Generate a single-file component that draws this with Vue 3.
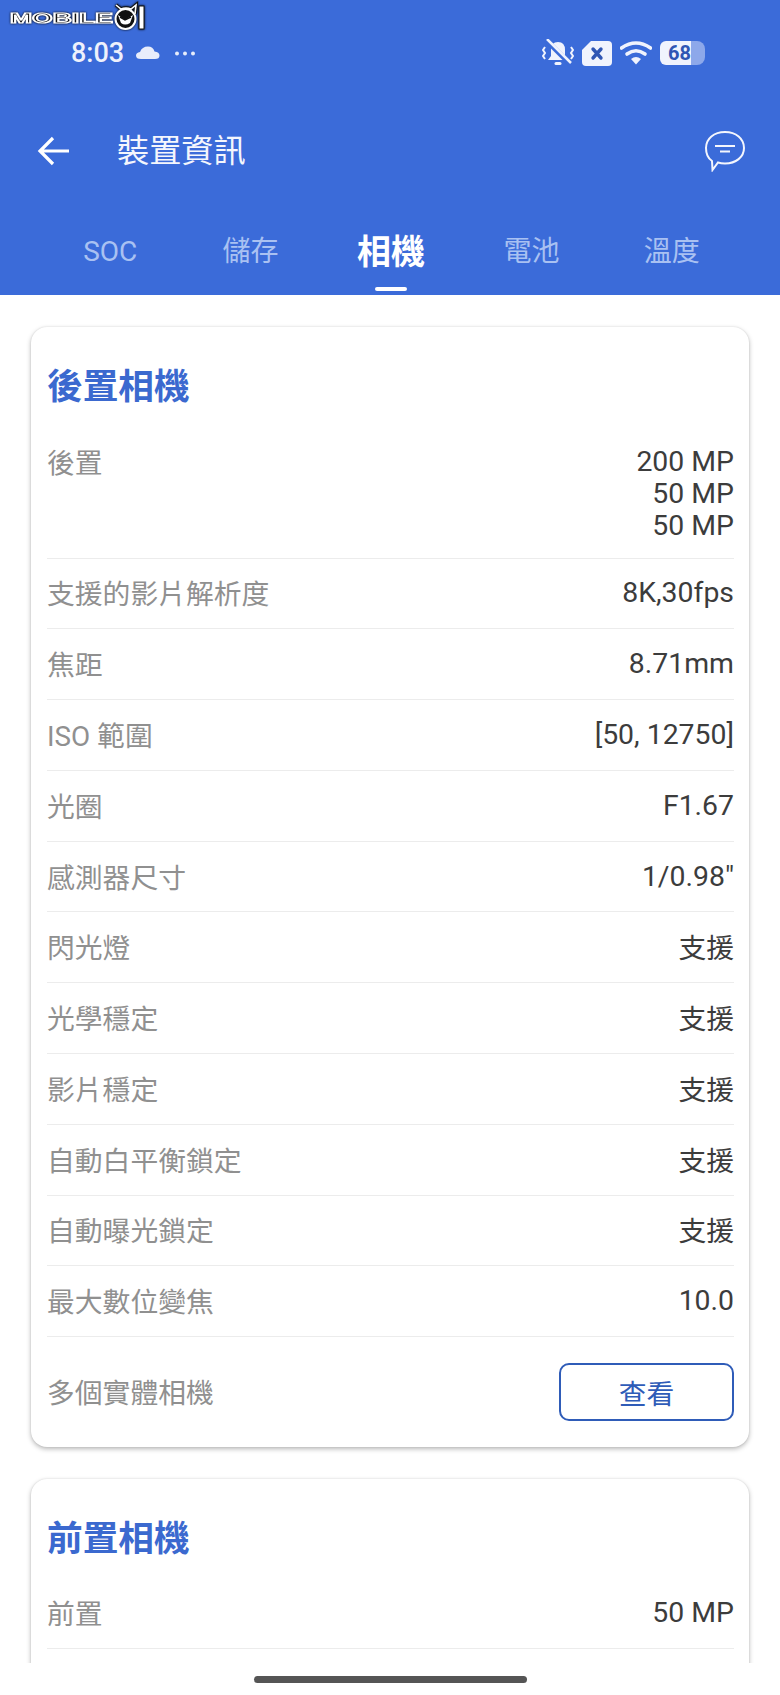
<script setup>
const tabs = [
  { name: 'SOC' },
  { name: '儲存' },
  { name: '相機', active: true },
  { name: '電池' },
  { name: '溫度' },
]

const rows = [
  { label: '支援的影片解析度', value: '8K,30fps' },
  { label: '焦距', value: '8.71mm' },
  { label: 'ISO 範圍', value: '[50, 12750]' },
  { label: '光圈', value: 'F1.67' },
  { label: '感測器尺寸', value: '1/0.98"' },
  { label: '閃光燈', value: '支援', cjk: true },
  { label: '光學穩定', value: '支援', cjk: true },
  { label: '影片穩定', value: '支援', cjk: true },
  { label: '自動白平衡鎖定', value: '支援', cjk: true },
  { label: '自動曝光鎖定', value: '支援', cjk: true },
  { label: '最大數位變焦', value: '10.0' },
]
</script>

<template>
  <div class="page">
    <svg class="logo" width="150" height="34" viewBox="0 0 150 34">
      <text x="10" y="23" textLength="103" lengthAdjust="spacingAndGlyphs" class="logo-text">MOBILE</text>
      <path d="M116 5 L121 9 Q126 7 131 9 L136 5 L135 14" fill="none" stroke="#111" stroke-width="3.500" />
      <path d="M116 5 L121 9 Q126 7 131 9 L136 5 L135 14" fill="none" stroke="#fff" stroke-width="1.600" />
      <circle cx="125.500" cy="19" r="10" fill="#111" stroke="#fff" stroke-width="2" />
      <path d="M118 15 L125 20 L133 15 L130 23 Q125 26 121 23 Z" fill="#fff" />
      <path d="M120 17 L125 20 L131 17" fill="none" stroke="#111" stroke-width="1.500" />
      <rect x="139" y="6" width="5" height="23" fill="#fff" stroke="#111" stroke-width="1" />
    </svg>

    <header class="head">
      <div class="status">
        <div class="status-left">
          <span class="time">8:03</span>
          <svg width="24" height="14" viewBox="0 0 24 14">
            <path d="M5 13 Q0 13 0 9.500 Q0 6.500 4 6 Q6 0.500 12 0.500 Q17 0.500 18.500 5.500 Q23.500 6 23.500 9.500 Q23.500 13 19 13 Z" fill="#e8edfb" />
          </svg>
          <svg class="dots" width="22" height="5" viewBox="0 0 22 5">
            <circle cx="3" cy="2.500" r="2" fill="#e8edfb" />
            <circle cx="11" cy="2.500" r="2" fill="#e8edfb" />
            <circle cx="19" cy="2.500" r="2" fill="#e8edfb" />
          </svg>
        </div>
        <div class="status-right">
          <svg width="32" height="28" viewBox="0 0 32 28">
            <path d="M16 3 Q23 3 23 11 L23 17 L26 21 L6 21 L9 17 L9 11 Q9 3 16 3 Z" fill="#f0f3fd" />
            <rect x="12.500" y="23" width="7" height="3" rx="1.500" fill="#f0f3fd" />
            <path d="M4 1 L28 25" stroke="#3b6bd9" stroke-width="5" />
            <path d="M5 0 L29 24" stroke="#f0f3fd" stroke-width="2.500" />
            <path d="M3 8 L1 11 L3 14 L1 17 L3 20 M29 8 L31 11 L29 14 L31 17 L29 20" fill="none" stroke="#f0f3fd" stroke-width="2" />
          </svg>
          <svg class="sim" width="30" height="25" viewBox="0 0 30 25">
            <path d="M9 0 L26 0 Q30 0 30 4 L30 21 Q30 25 26 25 L4 25 Q0 25 0 21 L0 9 Z" fill="#f0f3fd" />
            <path d="M11 8 L19 17 M19 8 L11 17" stroke="#2f56b4" stroke-width="3.400" stroke-linecap="round" />
          </svg>
          <svg class="wifi" width="32" height="24" viewBox="0 0 32 24">
            <path d="M1.500 7 Q16 -3 30.500 7" fill="none" stroke="#f0f3fd" stroke-width="3.600" stroke-linecap="round" />
            <path d="M7 13 Q16 6.500 25 13" fill="none" stroke="#f0f3fd" stroke-width="3.600" stroke-linecap="round" />
            <path d="M11 18 Q16 14 21 18 L16 23.500 Z" fill="#f0f3fd" />
          </svg>
          <div class="battery">
            <span class="battery-fill">68</span>
            <span class="battery-rest"></span>
          </div>
        </div>
      </div>

      <div class="toolbar">
        <svg class="back" width="34" height="30" viewBox="0 0 34 30">
          <path d="M32 15 L3 15 M16 2 L3 15 L16 28" fill="none" stroke="#fff" stroke-width="3.200" />
        </svg>
        <h1 class="title">裝置資訊</h1>
        <svg class="chat" width="42" height="42" viewBox="0 0 42 42">
          <path d="M21 2 C32 2 40 8.500 40 18 C40 27 32 33.500 21 33.500 Q17 33.500 14 32.500 L8.500 40 L8 31 C3.500 28 2 23 2 18 C2 8.500 10 2 21 2 Z" fill="none" stroke="#f4f6fd" stroke-width="2" />
          <path d="M11 16 L31 16 M16 21.500 L26 21.500" stroke="#f4f6fd" stroke-width="2" />
        </svg>
      </div>

      <nav class="tabs">
        <div v-for="t in tabs" :key="t.name" class="tab" :class="{ active: t.active }">
          {{ t.name }}
        </div>
      </nav>
    </header>

    <main class="content">
      <section class="card">
        <h2 class="card-title">後置相機</h2>
        <div class="row multi">
          <span class="label">後置</span>
          <span class="value">200 MP<br />50 MP<br />50 MP</span>
        </div>
        <div v-for="r in rows" :key="r.label" class="row">
          <span class="label">{{ r.label }}</span>
          <span class="value" :class="{ cjk: r.cjk }">{{ r.value }}</span>
        </div>
        <div class="row last">
          <span class="label">多個實體相機</span>
          <button class="view">查看</button>
        </div>
      </section>

      <section class="card tail">
        <h2 class="card-title">前置相機</h2>
        <div class="row multi single">
          <span class="label">前置</span>
          <span class="value">50 MP</span>
        </div>
      </section>
    </main>

    <div class="nav-bar"><span class="pill"></span></div>
  </div>
</template>

<style>
html, body {
  margin: 0;
  background: #fff;
}
</style>

<style scoped>
.page {
  position: relative;
  width: 780px;
  height: 1695px;
  overflow: hidden;
  background: #fff;
  font-family: Roboto, "Noto Sans CJK TC", sans-serif;
}

.logo {
  position: absolute;
  left: 0;
  top: 0;
  z-index: 2;
  filter: drop-shadow(0 0 1px #000);
}

.logo-text {
  font-family: "Liberation Sans", sans-serif;
  font-size: 14px;
  font-weight: 700;
  fill: #111;
  stroke: #fff;
  stroke-width: 1.2px;
}

.head {
  height: 295px;
  background: #3b6bd9;
  color: #fff;
  display: flex;
  flex-direction: column;
}

.status {
  height: 40px;
  margin-top: 33px;
  padding: 0 75px 0 71px;
  display: flex;
  justify-content: space-between;
  align-items: center;
}

.status-left {
  display: flex;
  align-items: center;
  gap: 12px;
}

.time {
  font-size: 27px;
  font-weight: 500;
  color: #eef1fc;
}

.dots {
  margin-left: 2px;
}

.status-right {
  display: flex;
  align-items: center;
  gap: 8px;
}

.battery {
  display: flex;
  align-items: center;
  width: 45px;
  height: 24px;
}

.battery-fill {
  width: 31px;
  height: 24px;
  background: #f0f3fd;
  border-radius: 6px 0 0 6px;
  color: #2f56b4;
  font-size: 20px;
  font-weight: 700;
  line-height: 24px;
  text-align: right;
}

.battery-rest {
  width: 14px;
  height: 24px;
  background: #8da8ea;
  border-radius: 0 8px 8px 0;
}

.toolbar {
  height: 92px;
  margin-top: 24px;
  padding: 8px 34px 0 37px;
  display: flex;
  align-items: center;
}

.title {
  margin: 0 0 0 46px;
  flex: 1;
  font-size: 32.200px;
  font-weight: 400;
  line-height: 40px;
  color: #f4f6fd;
}

.tabs {
  padding: 0 38px 0 40px;
  margin-top: 31px;
  display: flex;
}

.tab {
  position: relative;
  flex: 1;
  text-align: center;
  font-size: 28px;
  line-height: 48px;
  color: #a9c1f2;
}

.tab.active {
  font-size: 34px;
  font-weight: 700;
  color: #fff;
}

.tab.active::after {
  content: "";
  position: absolute;
  left: 54px;
  top: 59px;
  width: 32px;
  height: 4px;
  border-radius: 2px;
  background: #fff;
}

.content {
  padding: 32px 31px 0;
  display: flex;
  flex-direction: column;
  gap: 32px;
}

.card {
  padding: 0 15px 0 16px;
  background: #fff;
  border-radius: 16px;
  box-shadow: 0 2px 5px rgba(0, 0, 0, 0.28), 0 0 2px rgba(0, 0, 0, 0.1);
}

.card.tail {
  padding-bottom: 80px;
}

.card-title {
  margin: 0;
  padding-top: 35px;
  padding-bottom: 14px;
  font-size: 35.700px;
  font-weight: 700;
  line-height: 50px;
  color: #3b69cf;
}

.row {
  display: flex;
  justify-content: space-between;
  align-items: center;
  padding: 18.900px 0;
  border-bottom: 1px solid #ececec;
  font-size: 27.800px;
  line-height: 32px;
}

.row.multi {
  align-items: flex-start;
  padding: 20px 0 15.500px;
}

.row.multi.single {
  align-items: center;
  padding: 19px 0;
}

.row.last {
  border-bottom: 0;
  padding: 26px 0 26px;
}

.label {
  padding-top: 3px;
  line-height: 29px;
  color: #909090;
}

.value {
  color: #3c3c3c;
  text-align: right;
  font-size: 28.400px;
}

.value.cjk {
  padding-top: 3px;
  line-height: 29px;
  font-size: 27.800px;
}

.view {
  width: 175px;
  height: 58px;
  padding: 0;
  background: #fff;
  border: 2px solid #2f5cb8;
  border-radius: 10px;
  color: #2f5cb8;
  font-family: inherit;
  font-size: 27.800px;
}

.nav-bar {
  position: absolute;
  left: 0;
  right: 0;
  bottom: 0;
  height: 32px;
  background: #fff;
  display: flex;
  justify-content: center;
}

.pill {
  width: 273px;
  height: 7px;
  margin-top: 13px;
  border-radius: 4px;
  background: #555;
}
</style>
